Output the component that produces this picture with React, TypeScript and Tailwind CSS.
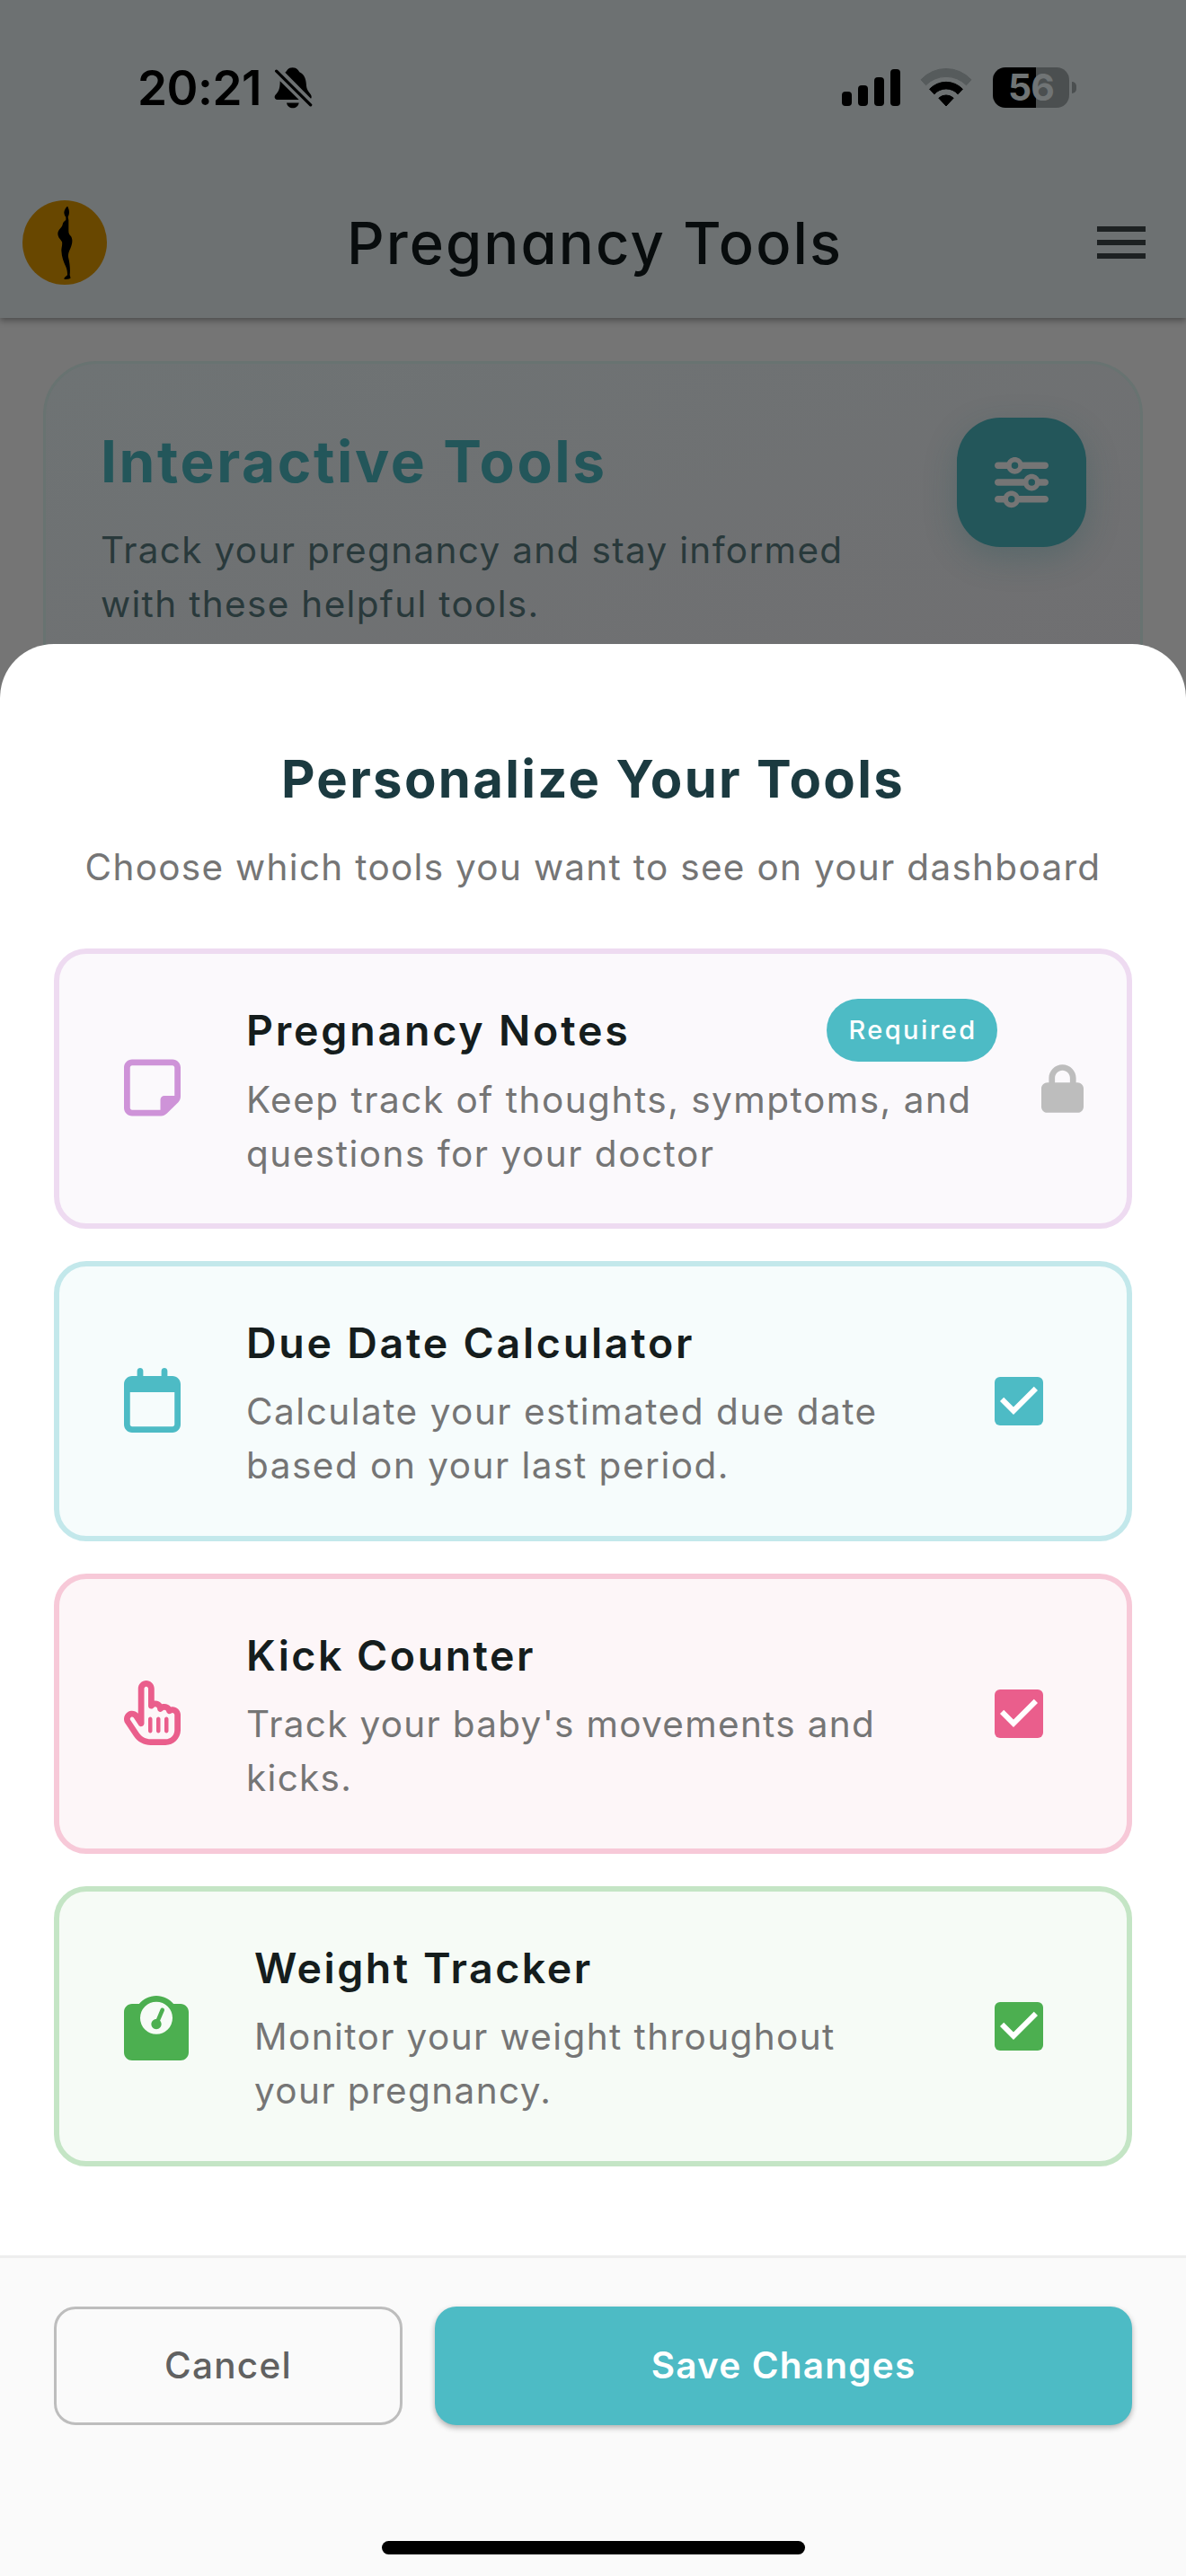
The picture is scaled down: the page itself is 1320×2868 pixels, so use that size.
import type { IconType } from "react-icons";
import {
  FaLock,
  FaRegCalendar,
  FaRegHandPointer,
  FaRegNoteSticky,
  FaSliders,
  FaWeightScale,
} from "react-icons/fa6";

type Tool = {
  title: string;
  lines: string[];
  icon: IconType;
  iconClass: string;
  cardClass: string;
  titleClass: string;
  lineClass: string;
  checkClass?: string;
  required?: boolean;
};

const tools: Tool[] = [
  {
    title: "Pregnancy Notes",
    lines: ["Keep track of thoughts, symptoms, and", "questions for your doctor"],
    icon: FaRegNoteSticky,
    iconClass: "mb-[2px] w-[63px] text-[#ce93d8]",
    cardClass: "border-[#eedbf1] bg-[#fbf9fc]",
    titleClass: "tracking-[2.8px]",
    lineClass: "tracking-[1.5px]",
    required: true,
  },
  {
    title: "Due Date Calculator",
    lines: ["Calculate your estimated due date", "based on your last period."],
    icon: FaRegCalendar,
    iconClass: "mb-[2px] w-[63px] text-[#4dbbc5]",
    cardClass: "border-[#c3e8eb] bg-[#f6fcfc]",
    titleClass: "tracking-[2.75px]",
    lineClass: "tracking-[1.5px]",
    checkClass: "text-[#4dbbc5]",
  },
  {
    title: "Kick Counter",
    lines: ["Track your baby's movements and", "kicks."],
    icon: FaRegHandPointer,
    iconClass: "mb-[2px] w-[63px] text-[#ea5e8c]",
    cardClass: "border-[#f7c9d8] bg-[#fdf6f8]",
    titleClass: "tracking-[2.5px]",
    lineClass: "tracking-[1.3px]",
    checkClass: "text-[#ea5e8c]",
  },
  {
    title: "Weight Tracker",
    lines: ["Monitor your weight throughout", "your pregnancy."],
    icon: FaWeightScale,
    iconClass: "mt-[4px] w-[72px] text-[#4caf50]",
    cardClass: "border-[#c4e5c5] bg-[#f6fbf6]",
    titleClass: "tracking-[2.5px]",
    lineClass: "tracking-[1.4px]",
    checkClass: "text-[#4caf50]",
  },
];

function BellSlash() {
  return (
    <svg viewBox="853 28 129 140" className="h-[47px] w-[43px]" fill="black">
      <path d="M890 48C897 42 898 31 915 31C931 31 934 41 938 46C957 54 960 74 961 92C962 108 973 115 977 124C979 130 978 133 976 135Z" />
      <path d="M873 76L936 138.500H864C855 138.500 852 129 858 122C866 113 873 106 873 76Z" />
      <path d="M861 43L975 156" stroke="black" strokeWidth="10" strokeLinecap="round" />
      <path d="M895 149H936C933 172 898 172 895 149Z" />
    </svg>
  );
}

function Wifi() {
  return (
    <svg viewBox="0 0 58 43" className="h-[43px] w-[58px]">
      <path d="M1 12.800A38 38 0 0 1 57 12.800L51.500 18.800A31.500 31.500 0 0 0 6.500 18.800Z" fill="#565b5c" stroke="#565b5c" strokeLinejoin="round" />
      <path d="M10.600 23.200A25.500 25.500 0 0 1 47.400 23.200L42.100 28.800A17.500 17.500 0 0 0 15.900 28.800Z" stroke="black" strokeLinejoin="round" />
      <path d="M20.800 33.200A12 12 0 0 1 37.200 33.200L29 42Z" stroke="black" strokeLinejoin="round" />
    </svg>
  );
}

function StatusBar() {
  return (
    <div className="flex h-[186px] items-center justify-between pt-[8px] pr-[122px] pl-[153px]">
      <div className="flex items-center">
        <span className="w-[152px] pt-[2px] text-[53px] leading-none font-semibold tracking-[-0.5px] text-black">
          20:21
        </span>
        <BellSlash />
      </div>
      <div className="flex items-center">
        <div className="flex h-[42px] items-end gap-[7px]">
          <i className="h-[16px] w-[11px] rounded-[4px] bg-black" />
          <i className="h-[23px] w-[11px] rounded-[4px] bg-black" />
          <i className="h-[32px] w-[11px] rounded-[4px] bg-black" />
          <i className="h-[41px] w-[11px] rounded-[4px] bg-black" />
        </div>
        <div className="mr-[23px] ml-[22px]">
          <Wifi />
        </div>
        <div className="flex h-[45px] w-[85px] items-center justify-center rounded-[14px] bg-[linear-gradient(90deg,#000_0_48px,#4b4f50_48px)]">
          <span className="text-[41px] leading-none font-bold tracking-[-1px] text-[#707475]">56</span>
        </div>
        <i className="ml-[3px] h-[13px] w-[5px] rounded-r-[5px] bg-[#4b4f50]" />
      </div>
    </div>
  );
}

function Logo() {
  return (
    <svg viewBox="14 474 282 282" className="size-[94px]">
      <circle cx="155" cy="615" r="141" fill="#684700" />
      <path
        d="M164 494C158 499 154 506 153 514C153 522 156 527 159 530L159 539C154 544 149 547 148 555C147 564 132 572 132 585C132 599 143 606 146 613C148 622 144 632 144 642C145 664 152 681 158 694C163 704 164 714 164 724C160 729 153 731 153 737C160 739 168 737 174 735C175 731 173 728 172 723C174 705 172 684 167 664C165 649 173 640 177 627C182 613 181 600 175 593C170 587 168 584 168 575L168 540C167 536 166 533 166 529C171 522 171 507 167 500C166 497 166 494 164 494Z"
        fill="black"
      />
    </svg>
  );
}

function AppBar() {
  return (
    <div className="grid h-[168px] grid-cols-[1fr_auto_1fr] items-center px-[25px]">
      <Logo />
      <h1 className="pl-[4px] text-[65px] leading-none font-medium tracking-[2.1px] text-[#080c0d] [font-feature-settings:'cv11']">
        Pregnancy Tools
      </h1>
      <div className="mr-[20px] flex w-[54px] flex-col gap-[9px] justify-self-end">
        <i className="h-[6px] bg-[#1d2122]" />
        <i className="h-[6px] bg-[#1d2122]" />
        <i className="h-[6px] bg-[#1d2122]" />
      </div>
    </div>
  );
}

function HeroCard() {
  return (
    <div className="mx-[48px] mt-[48px] flex h-[420px] items-start justify-between rounded-[60px] border-[3px] border-[#687371] bg-linear-to-br from-[#6e7374] to-[#706f71] px-[60px] pt-[60px]">
      <div className="pt-[7px] pl-px">
        <h2 className="text-[64px] leading-[84px] font-bold tracking-[2.6px] text-[#23565a]">Interactive Tools</h2>
        <p className="mt-[27px] text-[40.5px] leading-[60px] tracking-[1.33px] whitespace-nowrap text-[#29393b]">
          Track your pregnancy and stay informed
          <br />
          with these helpful tools.
        </p>
      </div>
      <div className="flex size-[144px] items-center justify-center rounded-[48px] bg-[#23565a] shadow-[0_12px_36px_rgba(35,86,90,0.3)]">
        <FaSliders className="size-[60px] text-[#757575]" />
      </div>
    </div>
  );
}

function CheckBox() {
  return (
    <svg viewBox="0 0 54 54" className="size-[54px]">
      <rect width="54" height="54" rx="6" fill="currentColor" />
      <path d="M21 42L6 27L10.230 22.770L21 33.510L43.770 10.740L48 15Z" fill="white" />
    </svg>
  );
}

function ToolCard({ tool }: { tool: Tool }) {
  const Icon = tool.icon;
  return (
    <div className={`flex h-[312px] items-center rounded-[36px] border-[6px] pl-[72px] ${tool.cardClass}`}>
      <Icon className={`h-[72px] shrink-0 ${tool.iconClass}`} />
      <div className="ml-[73px] flex h-[204px] flex-1 flex-col pt-[2px]">
        <div className="flex h-[69px] items-center justify-between">
          <h3 className={`pt-px text-[46.5px] leading-[66px] font-semibold whitespace-nowrap text-[#151d1d] ${tool.titleClass}`}>
            {tool.title}
          </h3>
          {tool.required && (
            <span className="flex h-[70px] w-[190px] shrink-0 items-center justify-center rounded-full bg-[#4dbbc5] pl-[2px] text-[29px] leading-none font-[450] tracking-[2.4px] text-white">
              Required
            </span>
          )}
        </div>
        <p className={`mt-[14px] text-[40.5px] leading-[60px] whitespace-nowrap text-[#757575] ${tool.lineClass}`}>
          {tool.lines[0]}
          <br />
          {tool.lines[1]}
        </p>
      </div>
      {tool.required ? (
        <FaLock className="mr-[48px] ml-[49px] h-[54px] w-[47px] shrink-0 text-[#bdbdbd]" />
      ) : (
        <div className={`mr-[93px] shrink-0 ${tool.checkClass}`}>
          <CheckBox />
        </div>
      )}
    </div>
  );
}

export default function App() {
  return (
    <div className="relative h-[2868px] w-[1320px] overflow-hidden bg-[#757575] font-['Inter',sans-serif]">
      <header className="bg-[#6d7172] shadow-[0_3px_7px_rgba(0,0,0,0.35)]">
        <StatusBar />
        <AppBar />
      </header>
      <HeroCard />

      <section className="absolute inset-x-0 top-[717px] bottom-0 flex flex-col rounded-t-[60px] bg-white pt-[114px]">
        <h2 className="text-center text-[58px] leading-[72px] font-bold tracking-[2.3px] text-[#1b3a40]">
          Personalize Your Tools
        </h2>
        <p className="mt-[33px] text-center text-[40.5px] leading-[60px] tracking-[1.3px] text-[#757575]">
          Choose which tools you want to see on your dashboard
        </p>
        <div className="mt-[60px] flex flex-col gap-[36px] px-[60px]">
          {tools.map((tool) => (
            <ToolCard key={tool.title} tool={tool} />
          ))}
        </div>
        <footer className="mt-[99px] flex flex-1 flex-col items-center justify-between border-t-[3px] border-[#eeeeee] bg-[#fafafa] px-[60px] pt-[54px] pb-[24px]">
          <div className="flex w-full gap-[36px]">
            <button className="h-[132px] w-[388px] rounded-[24px] border-[3px] border-[#bdbdbd] text-[40.5px] font-medium tracking-[1.25px] text-[#616161]">
              Cancel
            </button>
            <button className="h-[132px] flex-1 rounded-[24px] bg-[#4dbbc5] text-[40.5px] font-semibold tracking-[1.2px] text-white shadow-[0_3px_6px_rgba(0,0,0,0.3)]">
              Save Changes
            </button>
          </div>
          <div className="h-[15px] w-[471px] rounded-full bg-black" />
        </footer>
      </section>
    </div>
  );
}
